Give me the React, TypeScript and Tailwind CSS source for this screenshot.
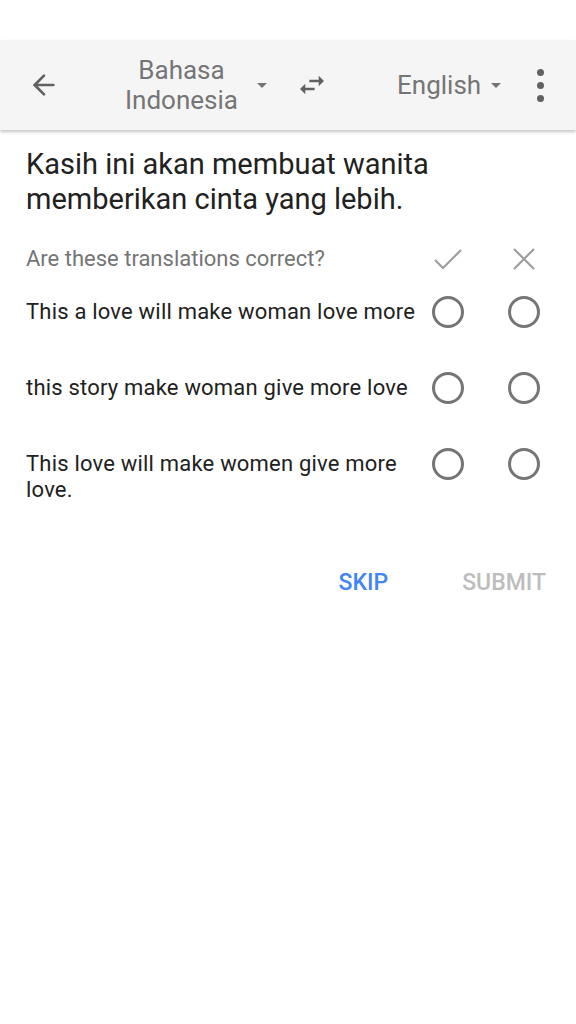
import { ArrowLeft } from "lucide-react"

const rows = [
  "This a love will make woman love more",
  "this story make woman give more love",
  "This love will make women give more love.",
]

function DropTriangle() {
  return (
    <svg width="10" height="5" viewBox="0 0 10 5" className="shrink-0">
      <path d="M0 0h10L5 5z" fill="#757575" />
    </svg>
  )
}

function Radio() {
  return <div className="w-[32px] h-[32px] shrink-0 rounded-full border-[3px] border-[#757575]" />
}

export default function App() {
  return (
    <div className="w-[576px] h-[1024px] bg-white font-['Roboto',sans-serif] overflow-hidden">
      {/* status bar area */}
      <div className="h-[40px] bg-white" />

      {/* toolbar */}
      <div className="relative z-10 h-[90px] bg-[#f5f5f5] flex items-center shadow-[0_2px_3px_rgba(0,0,0,0.22)]">
        <div className="w-[88px] flex justify-start pl-[28px]">
          <ArrowLeft size={32} strokeWidth={2} color="#616161" />
        </div>
        <div className="ml-[36px] w-[115px] text-center text-[26px] leading-[30px] text-[#757575]">
          Bahasa Indonesia
        </div>
        <div className="ml-[18px]">
          <DropTriangle />
        </div>
        <svg width="32" height="32" viewBox="0 0 24 24" className="ml-[29px]">
          <path d="M6.99 11L3 15l3.99 4v-3H14v-2H6.99v-3zM21 9l-3.99-4v3H10v2h7.01v3L21 9z" fill="#616161" />
        </svg>
        <div className="ml-[69px] text-[26px] leading-[30px] text-[#757575]">English</div>
        <div className="ml-[10px]">
          <DropTriangle />
        </div>
        <div className="ml-auto mr-[32px] flex flex-col gap-[6px]">
          <span className="w-[7px] h-[7px] rounded-full bg-[#616161]" />
          <span className="w-[7px] h-[7px] rounded-full bg-[#616161]" />
          <span className="w-[7px] h-[7px] rounded-full bg-[#616161]" />
        </div>
      </div>

      {/* source sentence */}
      <p className="px-[26px] pt-[17px] text-[29px] leading-[35px] text-[#212121]">
        Kasih ini akan membuat wanita memberikan cinta yang lebih.
      </p>

      {/* feedback question */}
      <div className="mt-[26px] pl-[26px] pr-[36px] flex items-center h-[32px] gap-[10px]">
        <span className="flex-1 text-[22px] leading-[26px] text-[#757575]">Are these translations correct?</span>
        <div className="w-[32px] flex justify-center">
          <svg width="30" height="24" viewBox="0 0 30 24">
            <path d="M2 13l8 8L28 3" fill="none" stroke="#9e9e9e" strokeWidth="2.2" />
          </svg>
        </div>
        <div className="w-[32px] ml-[34px] flex justify-center">
          <svg width="24" height="24" viewBox="0 0 24 24">
            <path d="M2 2l20 20M22 2L2 22" fill="none" stroke="#9e9e9e" strokeWidth="2.2" />
          </svg>
        </div>
      </div>

      {/* candidate translations */}
      <div className="mt-[21px] flex flex-col gap-[44px]">
        {rows.map((text) => (
          <div key={text} className="pl-[26px] pr-[36px] flex items-start gap-[10px]">
            <span className="flex-1 pt-[3px] text-[22px] leading-[26px] tracking-[0.2px] text-[#212121]">{text}</span>
            <Radio />
            <div className="ml-[34px]">
              <Radio />
            </div>
          </div>
        ))}
      </div>

      {/* actions */}
      <div className="mt-[67px] flex justify-end items-center gap-[74px] pr-[30px]">
        <span className="text-[23px] leading-[26px] font-medium text-[#4285f4]">SKIP</span>
        <span className="text-[23px] leading-[26px] font-medium text-[#bdbdbd]">SUBMIT</span>
      </div>
    </div>
  )
}
